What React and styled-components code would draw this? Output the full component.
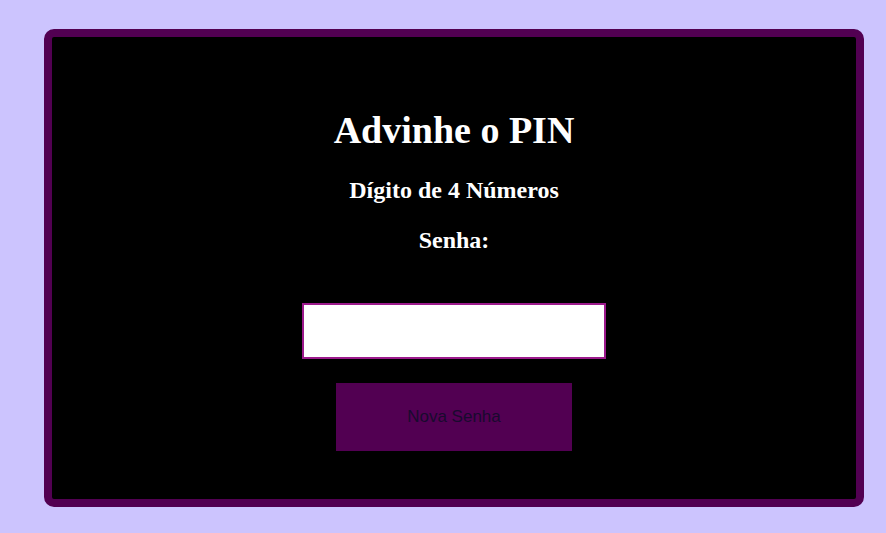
import React from "react";
import styled, { createGlobalStyle } from "styled-components";

const GlobalStyle = createGlobalStyle`
    body {
        margin: 0;
        background: #ccc4fe;
        font-family: "Liberation Serif", "Times New Roman", serif;
    }
`;

const Card = styled.main`
    box-sizing: border-box;
    width: 820px;
    margin: 29px 22px 26px 44px;
    padding: 71px 0 48px;
    background: #000;
    border: 8px solid #520052;
    border-radius: 10px;
    display: flex;
    flex-direction: column;
    align-items: center;
    color: #fff;
`;

const Title = styled.h1`
    margin: 0 0 24px;
    font-size: 38px;
    line-height: 44px;
    font-weight: bold;
`;

const Subtitle = styled.h2`
    margin: ${(p) => p.$top || 0}px 0 0;
    font-size: 24px;
    line-height: 28px;
    font-weight: bold;
`;

const PinInput = styled.input`
    box-sizing: border-box;
    width: 304px;
    height: 56px;
    margin-top: 49px;
    border: 2px solid #9c1a8c;
    background: #fff;
    outline: none;
    font-size: 20px;
`;

const Button = styled.button`
    width: 236px;
    height: 68px;
    margin-top: 24px;
    border: none;
    background: #520052;
    color: #180a2e;
    font-family: "Liberation Sans", Arial, sans-serif;
    font-size: 17px;
    cursor: pointer;
`;

const App = () => {
    return (
        <>
            <GlobalStyle />
            <Card>
                <Title>Advinhe o PIN</Title>
                <Subtitle>Dígito de 4 Números</Subtitle>
                <Subtitle $top={22}>Senha:</Subtitle>
                <PinInput type="text" />
                <Button type="button">Nova Senha</Button>
            </Card>
        </>
    );
};

export default App;
